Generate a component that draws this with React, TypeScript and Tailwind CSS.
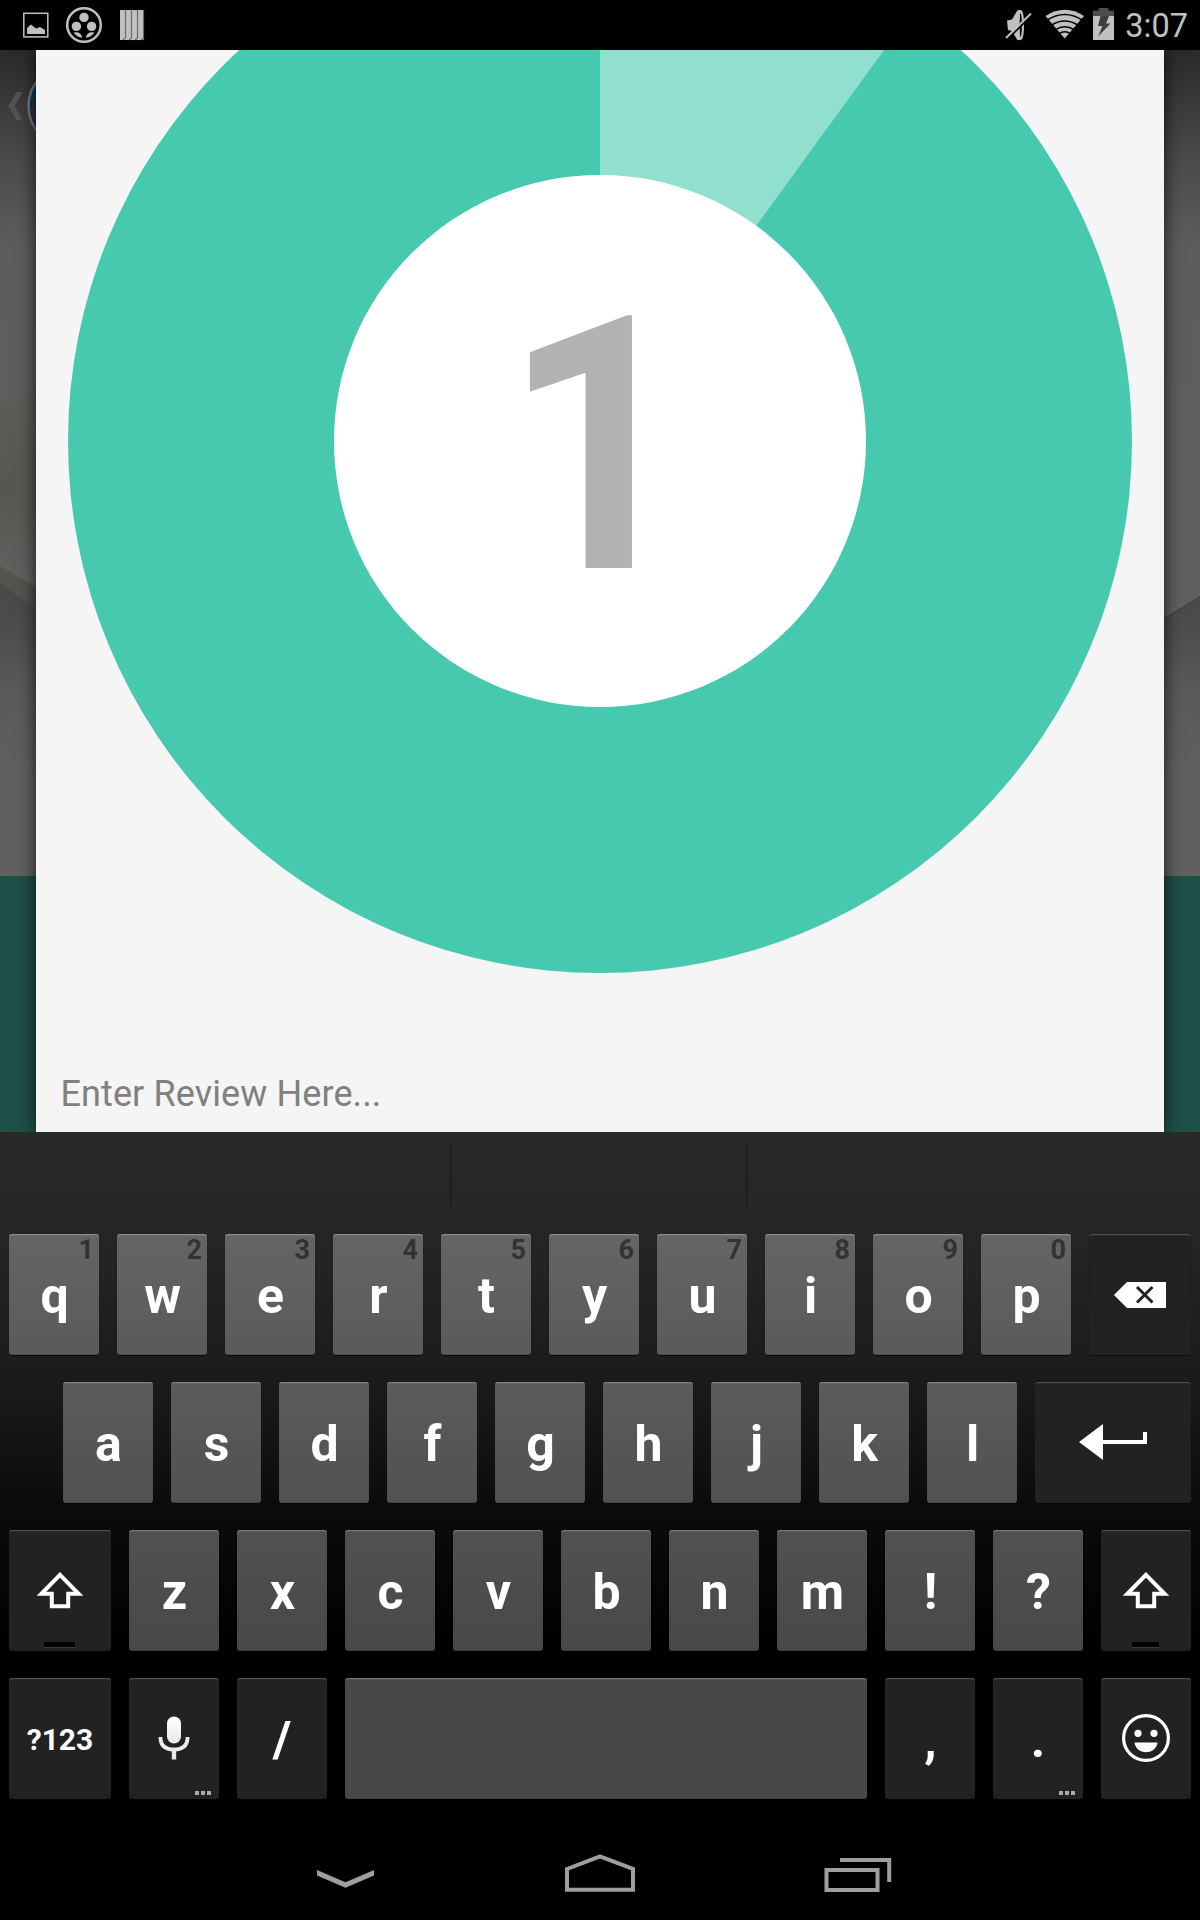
import type { ReactNode } from "react";

const KEY = "relative h-[121px] shrink-0 rounded-[3px] flex justify-center font-bold text-white text-[50px] leading-[124px]";
const LIGHT = "shadow-[inset_0_1px_0_rgba(255,255,255,0.2),inset_0_2px_0_rgba(255,255,255,0.06),inset_0_-1px_0_rgba(0,0,0,0.12),0_1px_1px_rgba(0,0,0,0.7)]";
const DARK = "bg-[#222222] shadow-[inset_0_1px_0_rgba(255,255,255,0.18),inset_0_2px_0_rgba(255,255,255,0.04),0_1px_1px_rgba(0,0,0,0.6)]";

function Letter({ label, hint, tone }: { label: string; hint?: string; tone: string }) {
  return (
    <div className={`${KEY} ${LIGHT} ${tone} w-[90px] pl-px`}>
      {label}
      {hint && (
        <span className="absolute right-[5px] top-[2px] text-[27px] leading-[28px] text-[#333333]">{hint}</span>
      )}
    </div>
  );
}

function Dark({ width, children }: { width: string; children: ReactNode }) {
  return <div className={`${KEY} ${DARK} ${width}`}>{children}</div>;
}

function More() {
  return (
    <span className="absolute bottom-[4px] right-[8px] flex gap-[2px]">
      <i className="h-[4px] w-[4px] bg-[#aaaaaa]" />
      <i className="h-[4px] w-[4px] bg-[#aaaaaa]" />
      <i className="h-[4px] w-[4px] bg-[#aaaaaa]" />
    </span>
  );
}

function Shift({ width, bar }: { width: string; bar: string }) {
  return (
    <Dark width={width}>
      <svg className="mt-[42px] h-[38px] w-[50px]" viewBox="0 0 50 38">
        <path d="M25 2.8 L43.6 21.8 H33.2 V34.2 H16.8 V21.8 H6.4 Z" fill="none" stroke="#fff" strokeWidth="4" />
      </svg>
      <span className={`absolute bottom-[4px] h-[5px] bg-black shadow-[0_1px_0_#3a3a3a] ${bar}`} />
    </Dark>
  );
}

function StatusBar() {
  return (
    <header className="flex h-[50px] justify-between bg-black">
      <svg className="h-[50px] w-[160px]" viewBox="0 0 160 50" fill="#c0c0c0">
        <rect x="23.8" y="13.3" width="24" height="23.6" fill="none" stroke="#c0c0c0" strokeWidth="1.5" />
        <path d="M27 34 V28 L31 24.5 L36 28.5 L40 27 L45 30 V34 Z" />
        <circle cx="84" cy="25" r="16.8" fill="none" stroke="#c0c0c0" strokeWidth="2.5" />
        <circle cx="84" cy="17.4" r="4.7" />
        <circle cx="76.4" cy="26.4" r="4.7" />
        <circle cx="91.6" cy="26.4" r="4.7" />
        <path d="M73.5 32.5 Q81 31 82.3 37.8 Q77 37.2 73.5 32.5 Z M94.5 32.5 Q87 31 85.7 37.8 Q91 37.2 94.5 32.5 Z" />
        <path d="M120 10 H144 V39 L143 40 H120 Z" />
        <path d="M125.500 10 V38 L123 40 M131.500 10 V38 L129 40 M137.500 10 V38 L135 40 M143.500 10 V38 L141 40" fill="none" stroke="#6a6a6a" strokeWidth="1.200" />
      </svg>
      <div className="flex pr-[12px]">
        <svg className="h-[50px] w-[120px]" viewBox="1000 0 120 50" fill="#c0c0c0">
          <path d="M1007 20.500 L1012 19.500 L1017 11 Q1019 9 1020.500 11 Q1018.500 25 1020.500 39 Q1019 41 1017 39.500 L1012 31 L1008 30 Z" />
          <ellipse cx="1020.500" cy="25" rx="2.500" ry="14" fill="none" stroke="#c0c0c0" strokeWidth="2" />
          <path d="M1007 39.500 L1032 15" stroke="#000" strokeWidth="2" />
          <path d="M1006 38 L1031 13.500" stroke="#c0c0c0" strokeWidth="2" />
          <path d="M1064.700 38.500 L1045.500 16 Q1064.700 3.500 1084 16 Z" />
          <path d="M1046.500 20.500 Q1064.700 8.500 1083 20.500 M1051 25.500 Q1064.700 16.500 1078.500 25.500 M1055 30 Q1064.700 23.500 1074.500 30 M1058.500 34 Q1064.700 29.500 1071 34" fill="none" stroke="#000" strokeWidth="1.500" />
          <path d="M1093 16 H1114 V40 H1093 Z" />
          <path d="M1093 16 V10.500 H1098.500 V8 H1108.500 V10.500 H1114 V16 Z" fill="#4d4d4d" />
          <path d="M1100.500 16 H1109 L1106 23.500 H1110.500 L1098 36.500 L1102.500 26 H1098 Z" fill="#3d3d3d" />
        </svg>
        <span className="w-[68px] text-right text-[32.5px] leading-[52px] text-[#c0c0c0]">3:07</span>
      </div>
    </header>
  );
}

function Keyboard() {
  const r1 = "bg-linear-to-b from-[#656565] to-[#5a5a5a]";
  const r2 = "bg-linear-to-b from-[#5b5b5b] to-[#515151]";
  const r3 = "bg-linear-to-b from-[#515151] to-[#484848]";
  const r4 = "bg-[#484848]";
  return (
    <section className="h-[692px] bg-[linear-gradient(#292929_0px,#262626_95px,#1b1b1b_248px,#0c0c0c_370px,#000000_520px)]">
      <div className="flex h-[102px] pt-[13px]">
        <div className="h-[64px] w-[452px] border-r-2 border-[#1f1f1f]" />
        <div className="h-[64px] w-[296px] border-r-2 border-[#1f1f1f]" />
      </div>
      <div className="flex flex-col gap-[27px]">
        <div className="flex gap-[18px] pl-[9px]">
          {"qwertyuiop".split("").map((c, i) => (
            <Letter key={c} label={c} hint={String((i + 1) % 10)} tone={r1} />
          ))}
          <Dark width="w-[102px]">
            <svg className="mt-[48px] h-[26px] w-[52px]" viewBox="0 0 52 26">
              <path d="M0 13 L13 0 H52 V26 H13 Z" fill="#fff" />
              <path d="M23 5 L38.500 20.500 M38.500 5 L23 20.500" stroke="#222" strokeWidth="3" />
            </svg>
          </Dark>
        </div>
        <div className="flex gap-[18px] pl-[63px]">
          {"asdfghjkl".split("").map((c) => (
            <Letter key={c} label={c} tone={r2} />
          ))}
          <Dark width="w-[156px]">
            <svg className="mt-[42px] h-[36px] w-[68px]" viewBox="0 0 68 36">
              <path d="M0 18 L24 0 V36 Z M24 16 H64 V8 H68 V20 H24 Z" fill="#fff" />
            </svg>
          </Dark>
        </div>
        <div className="flex gap-[18px] pl-[9px]">
          <Shift width="w-[102px]" bar="w-[31px] left-[35px]" />
          {"zxcvbnm!?".split("").map((c) => (
            <Letter key={c} label={c} tone={r3} />
          ))}
          <Shift width="w-[90px]" bar="w-[27px] left-[31px]" />
        </div>
        <div className="flex gap-[18px] pl-[9px]">
          <Dark width="w-[102px]">
            <span className="text-[30px] leading-[124px]">?123</span>
          </Dark>
          <Dark width="w-[90px]">
            <svg className="mt-[37px] h-[46px] w-[32px]" viewBox="0 0 32 46">
              <defs>
                <linearGradient id="mic" x1="0" y1="0" x2="0" y2="1">
                  <stop offset="0" stopColor="#fff" />
                  <stop offset="1" stopColor="#e8e8e8" />
                </linearGradient>
              </defs>
              <rect x="9" y="1.500" width="14" height="27" rx="7" fill="url(#mic)" />
              <path d="M2.400 22 C2.400 31 8 34.500 16 34.500 C24 34.500 29.600 31 29.600 22" fill="none" stroke="#ececec" strokeWidth="3.800" />
              <path d="M16 34 V44.500" stroke="#e8e8e8" strokeWidth="4.400" />
            </svg>
            <More />
          </Dark>
          <Dark width="w-[90px]">/</Dark>
          <div className={`${KEY} ${LIGHT} ${r4} w-[522px]`} />
          <Dark width="w-[90px]">
            <span className="pl-px">,</span>
          </Dark>
          <Dark width="w-[90px]">
            <span>.</span>
            <More />
          </Dark>
          <Dark width="w-[90px]">
            <svg className="mt-[36px] h-[48px] w-[48px]" viewBox="0 0 48 48" fill="#fff">
              <circle cx="24" cy="24" r="22.400" fill="none" stroke="#fff" strokeWidth="3.200" />
              <circle cx="16" cy="19.300" r="3.600" />
              <circle cx="32" cy="19.300" r="3.600" />
              <path d="M12.500 28.500 H35.500 C35 34 30 38.300 24 38.300 C18 38.300 13 34 12.500 28.500 Z" />
            </svg>
          </Dark>
        </div>
      </div>
    </section>
  );
}

function Backdrop() {
  return (
    <svg className="absolute inset-0 h-[1082px] w-[1200px]" viewBox="0 50 1200 1082">
      <defs>
        <linearGradient id="sky" x1="0" y1="50" x2="0" y2="876" gradientUnits="userSpaceOnUse">
          <stop offset="0" stopColor="#2a2a2a" />
          <stop offset="0.12" stopColor="#484848" />
          <stop offset="0.24" stopColor="#5d5d5d" />
          <stop offset="0.636" stopColor="#5f5f5f" />
          <stop offset="0.64" stopColor="#484848" />
          <stop offset="0.7" stopColor="#4d4d4d" />
          <stop offset="0.78" stopColor="#5a5a5a" />
          <stop offset="0.88" stopColor="#606060" />
          <stop offset="1" stopColor="#606060" />
        </linearGradient>
        <linearGradient id="plate" x1="0" y1="380" x2="0" y2="600" gradientUnits="userSpaceOnUse">
          <stop offset="0" stopColor="#5d5d5b" />
          <stop offset="0.5" stopColor="#575652" />
          <stop offset="1" stopColor="#636363" />
        </linearGradient>
      </defs>
      <rect x="0" y="50" width="1200" height="826" fill="url(#sky)" />
      <path d="M0 403 L36 384 V608 L0 583 Z" fill="url(#plate)" />
      <path d="M0 566 L36 587 V608 L0 583 Z" fill="#535350" />
      <path d="M1164 375 L1200 396 V598 L1164 620 Z" fill="#5f5f5d" />
      <path d="M1164 619 L1200 597" stroke="#444444" strokeWidth="1.500" />
      <rect x="0" y="876" width="1200" height="256" fill="#1f5047" />
      <path d="M16.500 92 H22.500 L14.500 106 L22.500 120 H16.500 L8.500 106 Z" fill="#525252" />
      <circle cx="69" cy="106" r="40.500" fill="#063a58" stroke="#757575" strokeWidth="2.600" />
      <path d="M33 98 L36 102 V114 L34 119 L31 110 Z" fill="#30363a" />
      <path d="M35 115 H42 V132 L35 126 Z" fill="#5a1a1e" />
    </svg>
  );
}

function Dialog() {
  return (
    <div className="relative mx-[36px] h-[1082px] bg-[#f5f5f5] shadow-[0_0_16px_rgba(0,0,0,0.75)]">
      <svg className="h-[990px] w-[1128px]" viewBox="36 50 1128 990">
        <circle cx="600" cy="441" r="532" fill="#47c9af" />
        <path d="M600 441 V-91 A532 532 0 0 1 912.700 10.600 Z" fill="#91dfcf" />
        <circle cx="600" cy="441" r="266" fill="#ffffff" />
        <text transform="translate(599.3 568) scale(0.93 1)" x="-2" y="0" textAnchor="middle" fontSize="355" fontWeight="700" fill="#b2b2b2">
          1
        </text>
      </svg>
      <div className="pl-[24.5px] text-[36px] leading-[108px] tracking-[0.1px] text-[#808080]">Enter Review Here...</div>
    </div>
  );
}

export default function App() {
  return (
    <div className="h-[1920px] w-[1200px] overflow-hidden bg-black font-['Roboto',sans-serif]">
      <StatusBar />
      <main className="relative h-[1082px] overflow-hidden">
        <Backdrop />
        <Dialog />
      </main>
      <Keyboard />
      <nav className="flex h-[96px] items-center bg-black">
        <svg className="h-[96px] w-[1200px]" viewBox="0 1824 1200 96" fill="none" stroke="#9e9e9e" strokeWidth="4">
          <path d="M317 1870 L345.500 1882.300 L374 1870 V1875.500 L345.500 1887.800 L317 1875.500 Z" fill="#9e9e9e" stroke="none" />
          <path d="M567 1869 L600 1856.500 L633 1869 V1889.800 H567 Z" />
          <path d="M826.500 1870 H877.500 V1890 H826.500 Z M840 1860 H889.200 V1882" />
        </svg>
      </nav>
    </div>
  );
}
